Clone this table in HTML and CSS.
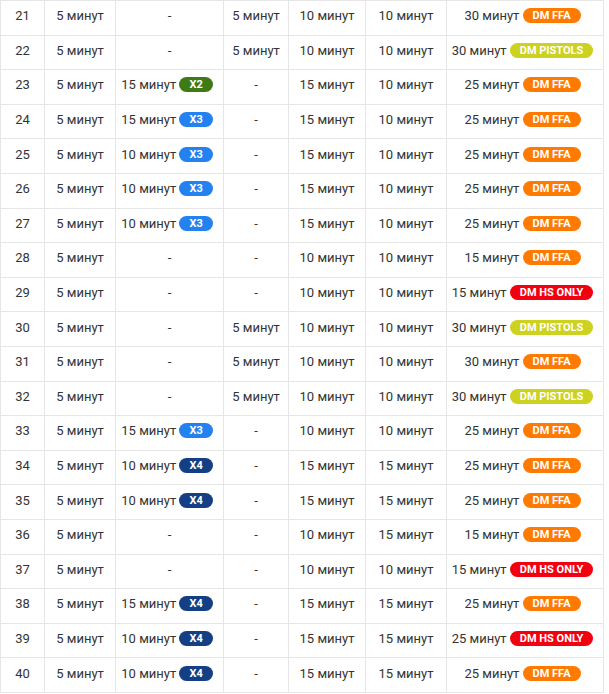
FILE: index.html
```html
<!DOCTYPE html>
<html lang="ru">
<head>
<meta charset="utf-8">
<link rel="stylesheet" href="styles.css">
</head>
<body>
<table class="sched">
<colgroup>
<col class="c1"><col class="c2"><col class="c3"><col class="c4"><col class="c5"><col class="c6"><col class="c7">
</colgroup>
<tbody>
<tr><td>21</td><td>5 минут</td><td>-</td><td>5 минут</td><td>10 минут</td><td>10 минут</td><td>30 минут <span class="b ffa">DM FFA</span></td></tr>
<tr><td>22</td><td>5 минут</td><td>-</td><td>5 минут</td><td>10 минут</td><td>10 минут</td><td>30 минут <span class="b pis">DM PISTOLS</span></td></tr>
<tr><td>23</td><td>5 минут</td><td>15 минут <span class="b x2">X2</span></td><td>-</td><td>15 минут</td><td>10 минут</td><td>25 минут <span class="b ffa">DM FFA</span></td></tr>
<tr><td>24</td><td>5 минут</td><td>15 минут <span class="b x3">X3</span></td><td>-</td><td>15 минут</td><td>10 минут</td><td>25 минут <span class="b ffa">DM FFA</span></td></tr>
<tr><td>25</td><td>5 минут</td><td>10 минут <span class="b x3">X3</span></td><td>-</td><td>15 минут</td><td>10 минут</td><td>25 минут <span class="b ffa">DM FFA</span></td></tr>
<tr><td>26</td><td>5 минут</td><td>10 минут <span class="b x3">X3</span></td><td>-</td><td>15 минут</td><td>10 минут</td><td>25 минут <span class="b ffa">DM FFA</span></td></tr>
<tr><td>27</td><td>5 минут</td><td>10 минут <span class="b x3">X3</span></td><td>-</td><td>15 минут</td><td>10 минут</td><td>25 минут <span class="b ffa">DM FFA</span></td></tr>
<tr><td>28</td><td>5 минут</td><td>-</td><td>-</td><td>10 минут</td><td>10 минут</td><td>15 минут <span class="b ffa">DM FFA</span></td></tr>
<tr><td>29</td><td>5 минут</td><td>-</td><td>-</td><td>10 минут</td><td>10 минут</td><td>15 минут <span class="b hs">DM HS ONLY</span></td></tr>
<tr><td>30</td><td>5 минут</td><td>-</td><td>5 минут</td><td>10 минут</td><td>10 минут</td><td>30 минут <span class="b pis">DM PISTOLS</span></td></tr>
<tr><td>31</td><td>5 минут</td><td>-</td><td>5 минут</td><td>10 минут</td><td>10 минут</td><td>30 минут <span class="b ffa">DM FFA</span></td></tr>
<tr><td>32</td><td>5 минут</td><td>-</td><td>5 минут</td><td>10 минут</td><td>10 минут</td><td>30 минут <span class="b pis">DM PISTOLS</span></td></tr>
<tr><td>33</td><td>5 минут</td><td>15 минут <span class="b x3">X3</span></td><td>-</td><td>10 минут</td><td>10 минут</td><td>25 минут <span class="b ffa">DM FFA</span></td></tr>
<tr><td>34</td><td>5 минут</td><td>10 минут <span class="b x4">X4</span></td><td>-</td><td>15 минут</td><td>15 минут</td><td>25 минут <span class="b ffa">DM FFA</span></td></tr>
<tr><td>35</td><td>5 минут</td><td>10 минут <span class="b x4">X4</span></td><td>-</td><td>15 минут</td><td>15 минут</td><td>25 минут <span class="b ffa">DM FFA</span></td></tr>
<tr><td>36</td><td>5 минут</td><td>-</td><td>-</td><td>10 минут</td><td>15 минут</td><td>15 минут <span class="b ffa">DM FFA</span></td></tr>
<tr><td>37</td><td>5 минут</td><td>-</td><td>-</td><td>10 минут</td><td>10 минут</td><td>15 минут <span class="b hs">DM HS ONLY</span></td></tr>
<tr><td>38</td><td>5 минут</td><td>15 минут <span class="b x4">X4</span></td><td>-</td><td>15 минут</td><td>15 минут</td><td>25 минут <span class="b ffa">DM FFA</span></td></tr>
<tr><td>39</td><td>5 минут</td><td>10 минут <span class="b x4">X4</span></td><td>-</td><td>15 минут</td><td>15 минут</td><td>25 минут <span class="b hs">DM HS ONLY</span></td></tr>
<tr><td>40</td><td>5 минут</td><td>10 минут <span class="b x4">X4</span></td><td>-</td><td>15 минут</td><td>15 минут</td><td>25 минут <span class="b ffa">DM FFA</span></td></tr>
</tbody>
</table>
</body>
</html>
```
FILE: styles.css
```css
html, body {
  margin: 0;
  padding: 0;
  background: #fff;
}
body {
  font-family: Roboto, "Liberation Sans", Arial, sans-serif;
  font-size: 13px;
  color: #333;
}
.sched {
  border-collapse: collapse;
  table-layout: fixed;
  width: 603px;
}
.c1 { width: 44px; }
.c2 { width: 71px; }
.c3 { width: 108px; }
.c4 { width: 65px; }
.c5 { width: 77px; }
.c6 { width: 81px; }
.c7 { width: 157px; }
.sched tr {
  height: 34.6px;
}
.sched td {
  border: 1px solid #e6e6e6;
  text-align: center;
  vertical-align: middle;
  padding: 0 0 4px;
  white-space: nowrap;
}
.b {
  display: inline-block;
  color: #fff;
  font-weight: 700;
  font-size: 11px;
  line-height: 15px;
  padding: 0 10px;
  margin-right: 5px;
  border-radius: 8px;
  vertical-align: 1px;
}
.x2 { background: #3f7a15; }
.x3 { background: #2381f0; }
.x4 { background: #143f84; }
.ffa { background: #ff7a00; }
.pis { background: #cdd11f; }
.hs { background: #f2000f; }
```
